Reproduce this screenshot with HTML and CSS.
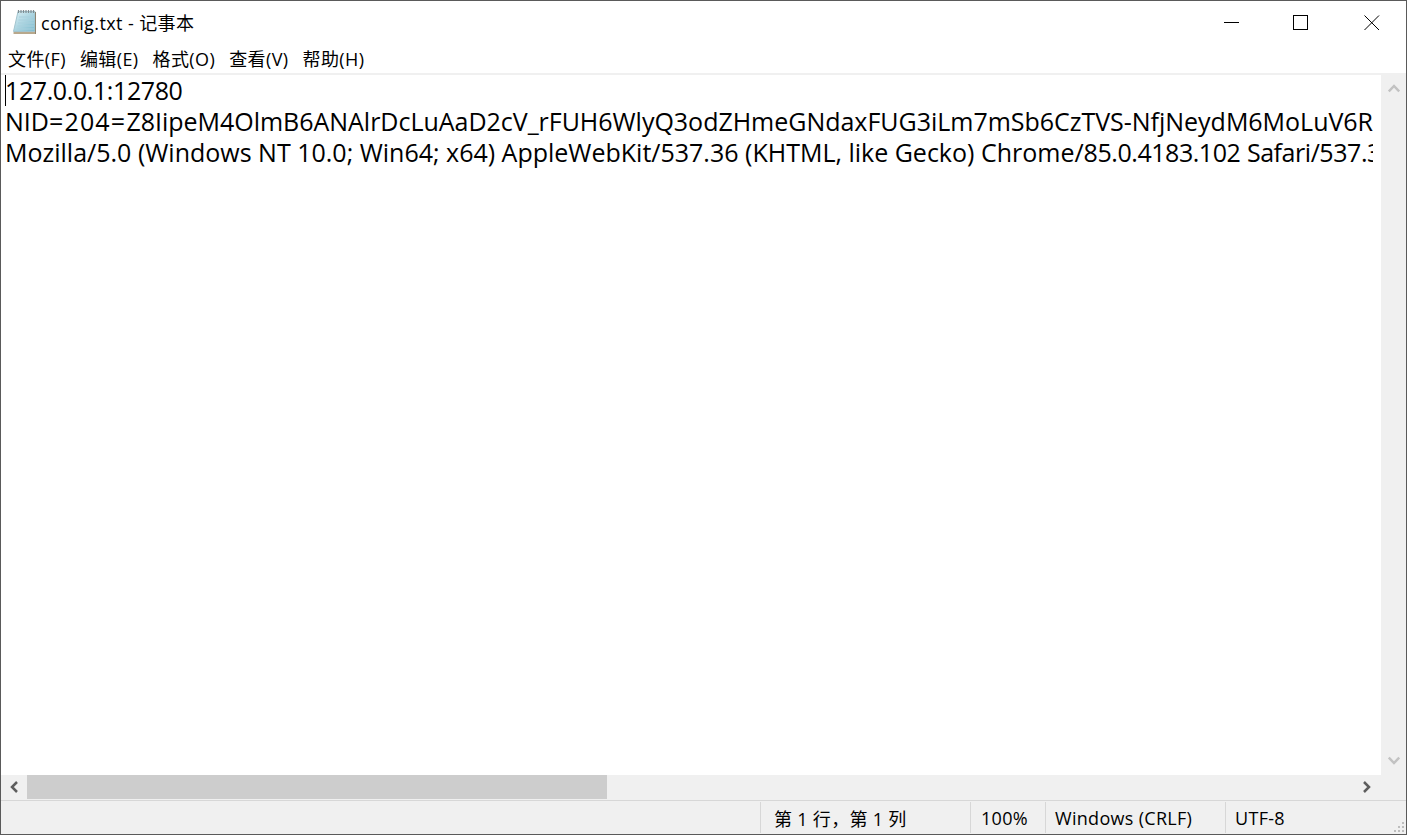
FILE: index.html
```html
<!DOCTYPE html>
<html lang="zh">
<head>
<meta charset="utf-8">
<title>config.txt - 记事本</title>
<link rel="stylesheet" href="styles.css">
</head>
<body>
<div class="window">
  <header class="titlebar">
    <svg class="app-icon" width="24" height="26" viewBox="0 0 24 26">
      <defs><linearGradient id="pad" x1="0" y1="0" x2="1" y2="1"><stop offset="0" stop-color="#dcf0f5"/><stop offset="1" stop-color="#7cbacd"/></linearGradient></defs>
      <path d="M5 2.500H22V22.500H0.500Z" fill="url(#pad)" stroke="#a3c4ce" stroke-width="1"/>
      <path d="M0.500 23H22.500V25H0.500Z" fill="#b8a88c"/>
      <path d="M22.500 3V25" stroke="#8d8471" stroke-width="1"/>
      <path d="M5.500 1V4M8 1V4M10.500 1V4M13 1V4M15.500 1V4M18 1V4M20.500 1V4" stroke="#7f8b90" stroke-width="1.200"/>
      <path d="M6 8H21M5.500 11H21M5 14H21M4.500 17H21M4 20H21" stroke="#a9d0dd" stroke-width="1"/>
    </svg>
    <span class="title">config.txt - 记事本</span>
    <div class="controls">
      <button class="ctl min" aria-label="最小化"><svg width="16" height="16" viewBox="0 0 16 16"><path d="M0 7.500H15" stroke="#000"/></svg></button>
      <button class="ctl max" aria-label="最大化"><svg width="16" height="16" viewBox="0 0 16 16"><rect x="0.500" y="0.500" width="14" height="14" fill="none" stroke="#000"/></svg></button>
      <button class="ctl close" aria-label="关闭"><svg width="16" height="16" viewBox="0 0 16 16"><path d="M0.500 0.500L15 15M15 0.500L0.500 15" stroke="#000"/></svg></button>
    </div>
  </header>
  <nav class="menubar">
    <span>文件(F)</span><span>编辑(E)</span><span>格式(O)</span><span>查看(V)</span><span>帮助(H)</span>
  </nav>
  <div class="editor-row">
    <main class="editor">
      <i class="caret"></i>
      <div class="line digits">127.0.0.1:12780</div>
      <div class="line cookie">NID<span class="eq">=204=</span>Z8IipeM4OlmB6ANAlrDcLuAaD2cV_rFUH6WlyQ3odZHmeGNdaxFUG3iLm7mSb6CzTVS-NfjNeydM6MoLuV6R</div>
      <div class="line">Mozilla/5.0 (Windows NT 10.0; Win64; x64) AppleWebKit/537.36 (KHTML, like Gecko) Chrome/<span class="num">85.0.4183.102</span> <span class="num">Safari/537.36</span></div>
    </main>
    <aside class="vscroll">
      <svg width="12" height="10" viewBox="0 0 12 10"><path d="M0.800 8.500L6 3L11.200 8.500" fill="none" stroke="#c2c2c2" stroke-width="2.500"/></svg>
      <svg width="12" height="10" viewBox="0 0 12 10"><path d="M0.800 1.500L6 7L11.200 1.500" fill="none" stroke="#c2c2c2" stroke-width="2.500"/></svg>
    </aside>
  </div>
  <div class="hscroll">
    <div class="harrow"><svg width="10" height="12" viewBox="0 0 10 12"><path d="M8 1L3 6L8 11" fill="none" stroke="#5d5d5d" stroke-width="2.500"/></svg></div>
    <div class="thumb"></div>
    <div class="harrow end"><svg width="10" height="12" viewBox="0 0 10 12"><path d="M2 1L7 6L2 11" fill="none" stroke="#5d5d5d" stroke-width="2.500"/></svg></div>
  </div>
  <footer class="statusbar">
    <span class="cell pos">第 1 行，第 1 列</span>
    <span class="cell zoom">100%</span>
    <span class="cell eol">Windows (CRLF)</span>
    <span class="cell enc">UTF-8</span>
    <svg class="grip" width="12" height="12" viewBox="0 0 12 12"><path d="M9 1h2v2H9zM5 5h2v2H5zM9 5h2v2H9zM1 9h2v2H1zM5 9h2v2H5zM9 9h2v2H9z" fill="#bdbdbd"/></svg>
  </footer>
</div>
</body>
</html>
```
FILE: styles.css
```css
* { box-sizing: border-box; }
html, body { margin: 0; height: 100%; background: #fff; }
body { font-family: "Open Sans", "Noto Sans CJK SC", sans-serif; color: #000; overflow: hidden; }
.window { width: 1407px; height: 835px; border: 1px solid #5a5a5a; display: flex; flex-direction: column; background: #fff; }
.titlebar { height: 41px; display: flex; align-items: center; padding-left: 12px; flex: none; }
.app-icon { flex: none; margin-right: 4px; }
.title { font-size: 18px; letter-spacing: 0.4px; }
.controls { margin-left: auto; display: flex; align-self: stretch; }
.ctl { height: 41px; border: 0; padding: 14px 0 0; background: none; display: flex; align-items: flex-start; justify-content: flex-start; }
.min { width: 69px; }
.max { width: 71px; }
.close { width: 42px; }
.menubar { height: 31px; flex: none; display: flex; align-items: center; padding-left: 7px; font-size: 18px; letter-spacing: 0.4px; }
.menubar span { white-space: nowrap; margin-right: 14px; }
.editor-row { flex: 1; min-height: 0; display: flex; border-top: 2px solid #f0f0f0; }
.editor { flex: 1; min-width: 0; overflow: hidden; position: relative; padding: 0 8px 0 4px; font-size: 25px; line-height: 31px; }
.line { white-space: nowrap; overflow: hidden; }
.digits { letter-spacing: -0.4px; }
.cookie { letter-spacing: -0.02px; }
.eq { letter-spacing: 1.200px; }
.num { letter-spacing: -0.45px; }
.caret { position: absolute; left: 4px; top: 0; width: 1px; height: 31px; background: #000; }
.vscroll { width: 25px; flex: none; background: #f0f0f0; display: flex; flex-direction: column; justify-content: space-between; align-items: center; padding: 8px 0 9px; }
.hscroll { height: 25px; flex: none; background: #f0f0f0; display: flex; padding-bottom: 1px; }
.harrow { width: 26px; flex: none; display: flex; align-items: center; justify-content: center; }
.harrow.end { margin-left: auto; width: 52px; padding-right: 26px; }
.thumb { width: 580px; background: #cdcdcd; }
.statusbar { height: 34px; flex: none; background: #f0f0f0; border-top: 1px solid #d7d7d7; display: flex; padding-left: 759px; font-size: 18px; letter-spacing: 0.3px; position: relative; }
.cell { border-left: 1px solid #d7d7d7; margin: 1px 0; white-space: nowrap; display: flex; align-items: center; }
.pos { width: 210px; padding-left: 13px; }
.zoom { width: 75px; padding-left: 10px; }
.eol { width: 180px; padding-left: 9px; }
.enc { padding-left: 9px; }
.grip { position: absolute; right: 1px; bottom: 1px; }
```
